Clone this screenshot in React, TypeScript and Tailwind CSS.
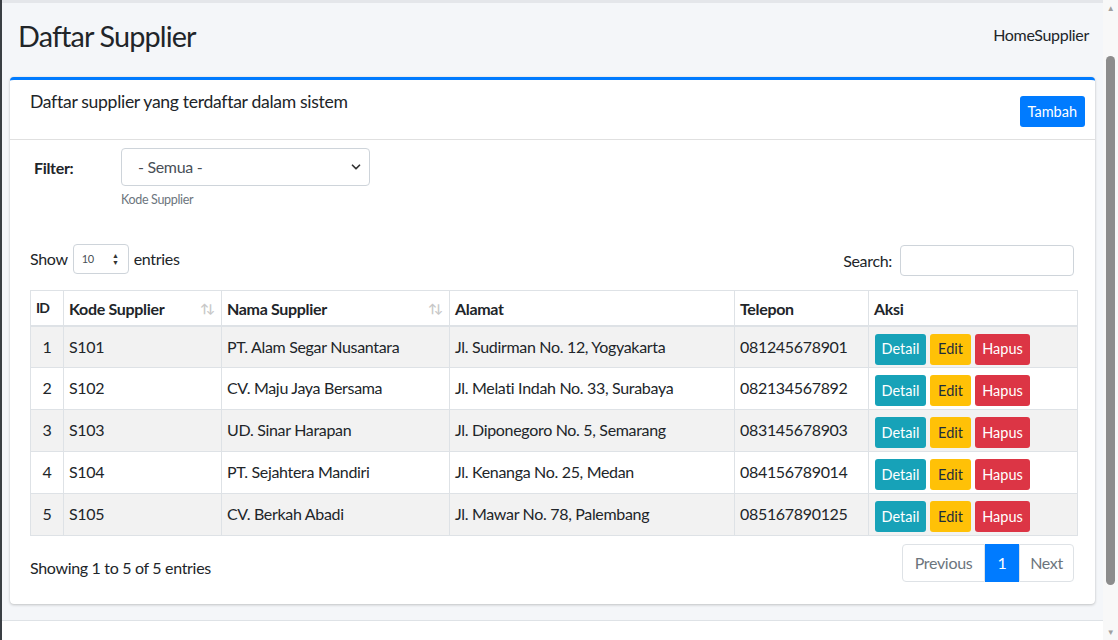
import { ChevronDown } from 'lucide-react'

type Supplier = {
  id: number
  kode: string
  nama: string
  alamat: string
  telepon: string
}

const suppliers: Supplier[] = [
  { id: 1, kode: 'S101', nama: 'PT. Alam Segar Nusantara', alamat: 'Jl. Sudirman No. 12, Yogyakarta', telepon: '081245678901' },
  { id: 2, kode: 'S102', nama: 'CV. Maju Jaya Bersama', alamat: 'Jl. Melati Indah No. 33, Surabaya', telepon: '082134567892' },
  { id: 3, kode: 'S103', nama: 'UD. Sinar Harapan', alamat: 'Jl. Diponegoro No. 5, Semarang', telepon: '083145678903' },
  { id: 4, kode: 'S104', nama: 'PT. Sejahtera Mandiri', alamat: 'Jl. Kenanga No. 25, Medan', telepon: '084156789014' },
  { id: 5, kode: 'S105', nama: 'CV. Berkah Abadi', alamat: 'Jl. Mawar No. 78, Palembang', telepon: '085167890125' },
]

function SortIcon() {
  return (
    <span className="absolute right-[9px] top-[12px] text-[12px] leading-none tracking-[-3px] text-[#c7c7c7]">
      ↑↓
    </span>
  )
}

function Th({ children, sort, className = '' }: { children: React.ReactNode; sort?: boolean; className?: string }) {
  return (
    <th
      className={`relative border border-[#dee2e6] border-b-2 px-[5px] pt-[6px] pb-[4px] text-left align-top font-bold ${className}`}
    >
      {children}
      {sort && <SortIcon />}
    </th>
  )
}

function ActionButtons() {
  return (
    <div className="flex gap-[4px] pt-[3px] tracking-normal">
      <button className="h-[31px] w-[51px] rounded-[3px] bg-[#17a2b8] text-[14.5px] text-white">Detail</button>
      <button className="h-[31px] w-[41px] rounded-[3px] bg-[#ffc107] text-[14.5px] text-[#1f2d3d]">Edit</button>
      <button className="h-[31px] w-[55px] rounded-[3px] bg-[#dc3545] text-[14.5px] text-white">Hapus</button>
    </div>
  )
}

export default function App() {
  return (
    <div className="flex h-[640px] w-[1118px] overflow-hidden bg-white font-['Lato',sans-serif] text-[16px] tracking-[-0.02em] text-[#212529]">
      {/* content wrapper */}
      <div className="flex w-[1103px] flex-col border-l-2 border-l-[#3a3f44] shadow-[inset_6px_0_10px_-6px_rgba(0,0,0,0.25)]">
        <div className="flex flex-1 flex-col border-t-[3px] border-t-[#e4e6ea] bg-[#f4f6f9]">
          {/* header */}
          <div className="flex h-[74px] items-start justify-between pl-[16px] pr-[14px]">
            <h1 className="pt-[15px] text-[28.8px] leading-[36px] tracking-[-0.03em] text-[#212529]">Daftar Supplier</h1>
            <div className="pt-[20px] text-[16px] text-[#212529]">
              Home<span>Supplier</span>
            </div>
          </div>

          {/* card */}
          <div className="mx-[8px] flex flex-col rounded-[4px] border-t-[3px] border-t-[#007bff] bg-white shadow-[0_0_1px_rgba(0,0,0,0.13),0_1px_3px_rgba(0,0,0,0.2)]">
            <div className="flex h-[60px] items-start justify-between border-b border-[#e0e0e0] px-[20px]">
              <div className="pt-[9px] text-[17.6px] leading-[26px]">Daftar supplier yang terdaftar dalam sistem</div>
              <button className="mr-[-10px] mt-[16px] h-[31px] rounded-[3px] bg-[#007bff] px-[8px] text-[14.5px] tracking-normal text-white">
                Tambah
              </button>
            </div>

            <div className="px-[20px] pb-[22px]">
              {/* filter */}
              <div className="flex pt-[8px]">
                <label className="w-[91px] pl-[4px] pt-[8px] font-bold">Filter:</label>
                <div>
                  <div className="flex h-[38px] w-[249px] items-center justify-between rounded-[4px] border border-[#ced4da] pl-[16px] pr-[6px] text-[#495057]">
                    <span>- Semua -</span>
                    <ChevronDown size={14} strokeWidth={3} className="text-[#333]" />
                  </div>
                  <div className="mt-[5px] text-[12.5px] text-[#6c757d]">Kode Supplier</div>
                </div>
              </div>

              {/* datatable controls */}
              <div className="mt-[33px] flex items-center justify-between">
                <div className="flex items-center gap-[3px]">
                  <span>Show</span>
                  <div className="mx-[2px] flex h-[30px] w-[56px] items-center justify-between rounded-[4px] border border-[#ced4da] pl-[8px] pr-[9px] text-[11px] text-[#495057]">
                    <span>10</span>
                    <span className="flex flex-col text-[7px] leading-[7px] text-[#333]">
                      <span>▲</span>
                      <span>▼</span>
                    </span>
                  </div>
                  <span>entries</span>
                </div>
                <div className="flex items-center gap-[8px] pt-[2px]">
                  <span className="pt-[1px]">Search:</span>
                  <div className="mr-[1px] h-[31px] w-[174px] rounded-[4px] border border-[#ced4da]" />
                </div>
              </div>

              {/* table */}
              <table className="mt-[14px] w-[1048px] table-fixed border-collapse border border-[#dee2e6]">
                <colgroup>
                  <col className="w-[33px]" />
                  <col className="w-[158px]" />
                  <col className="w-[228px]" />
                  <col className="w-[285px]" />
                  <col className="w-[134px]" />
                  <col />
                </colgroup>
                <thead>
                  <tr className="h-[35px]">
                    <Th className="text-center text-[14px] tracking-[-1px]">ID</Th>
                    <Th sort>Kode Supplier</Th>
                    <Th sort>Nama Supplier</Th>
                    <Th>Alamat</Th>
                    <Th>Telepon</Th>
                    <Th>Aksi</Th>
                  </tr>
                </thead>
                <tbody>
                  {suppliers.map((s, i) => (
                    <tr key={s.id} className={`h-[42px] ${i % 2 === 0 ? 'bg-[#f2f2f2]' : 'bg-white'}`}>
                      <td className="border border-[#dee2e6] px-[5px] pt-[8px] align-top text-center">{s.id}</td>
                      <td className="border border-[#dee2e6] px-[5px] pt-[8px] align-top">{s.kode}</td>
                      <td className="border border-[#dee2e6] px-[5px] pt-[8px] align-top">{s.nama}</td>
                      <td className="border border-[#dee2e6] px-[5px] pt-[8px] align-top">{s.alamat}</td>
                      <td className="border border-[#dee2e6] px-[5px] pt-[8px] align-top">{s.telepon}</td>
                      <td className="border border-[#dee2e6] px-[6px] pt-[4px] align-top">
                        <ActionButtons />
                      </td>
                    </tr>
                  ))}
                </tbody>
              </table>

              {/* footer */}
              <div className="mt-[8px] flex items-start justify-between">
                <div className="pt-[12px]">Showing 1 to 5 of 5 entries</div>
                <div className="mr-[1px] flex h-[38px] text-[16px]">
                  <span className="flex w-[83px] items-center justify-center rounded-l-[4px] border border-[#dee2e6] text-[#6c757d]">
                    Previous
                  </span>
                  <span className="flex w-[34px] items-center justify-center bg-[#007bff] text-white">1</span>
                  <span className="flex w-[55px] items-center justify-center rounded-r-[4px] border border-[#dee2e6] text-[#6c757d]">
                    Next
                  </span>
                </div>
              </div>
            </div>
          </div>
          <div className="flex-1" />
        </div>
        <div className="h-[20px] border-t border-[#dee2e6] bg-white" />
      </div>

      {/* browser scrollbar */}
      <div className="flex w-[15px] flex-col items-center bg-[#f8f8f8]">
        <span className="mt-[3px] text-[8px] leading-[10px] text-[#a0a0a0]">▲</span>
        <div className="mt-[43px] h-[529px] w-[9px] rounded-full bg-[#8c8c8c]" />
        <div className="flex-1" />
        <span className="mb-[3px] text-[8px] leading-[10px] text-[#a0a0a0]">▼</span>
      </div>
    </div>
  )
}
